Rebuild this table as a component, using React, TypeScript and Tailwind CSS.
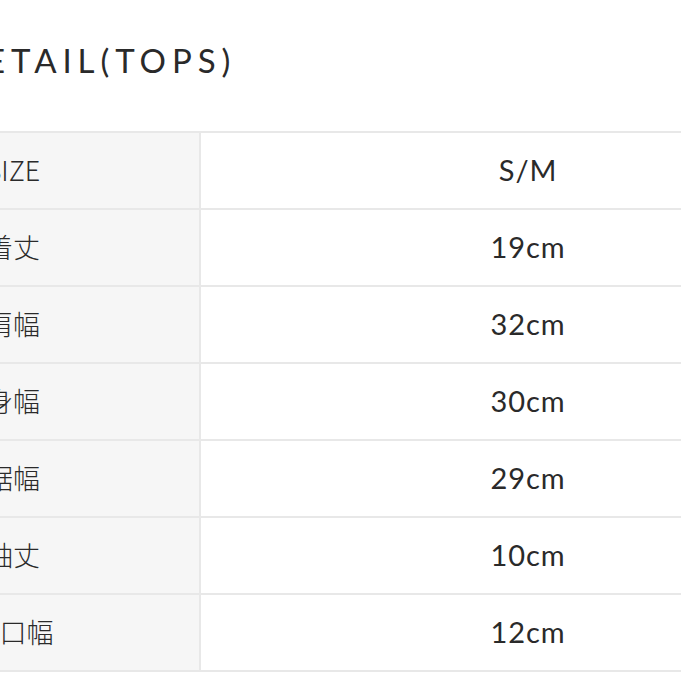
import React from "react";

// size chart rows (label, value)
const rows: [string, string][] = [
  ["SIZE", "S/M"],
  ["着丈", "19cm"],
  ["肩幅", "32cm"],
  ["身幅", "30cm"],
  ["裾幅", "29cm"],
  ["袖丈", "10cm"],
  ["袖口幅", "12cm"],
];

export default function App() {
  return (
    <div className="w-[681px] h-[681px] overflow-hidden bg-white text-[#2a2a2a]">
      <div className="pt-[40px] h-[131px]">
        <h1
          className="ml-[-45px] whitespace-nowrap text-[33px] leading-[40px] font-normal tracking-[0.18em]"
          style={{ fontFamily: "Lato, 'Noto Sans', sans-serif" }}
        >
          DETAIL(TOPS)
        </h1>
      </div>
      <div className="ml-[-173px] w-[1028px] border-t-2 border-[#e8e8e8]">
        {rows.map(([label, value]) => (
          <div key={label} className="flex h-[77px] border-b-2 border-[#e8e8e8]">
            <div
              className="w-[374px] shrink-0 flex items-center justify-center bg-[#f6f6f6] border-r-2 border-[#e8e8e8] text-[27px] font-light"
              style={{ fontFamily: "'Noto Sans CJK JP', 'Noto Sans', sans-serif" }}
            >
              {label}
            </div>
            <div
              className="flex-1 flex items-center justify-center text-[29px] font-normal tracking-[0.03em] pb-[2px]"
              style={{ fontFamily: "Lato, 'Noto Sans', sans-serif" }}
            >
              {value}
            </div>
          </div>
        ))}
      </div>
    </div>
  );
}
